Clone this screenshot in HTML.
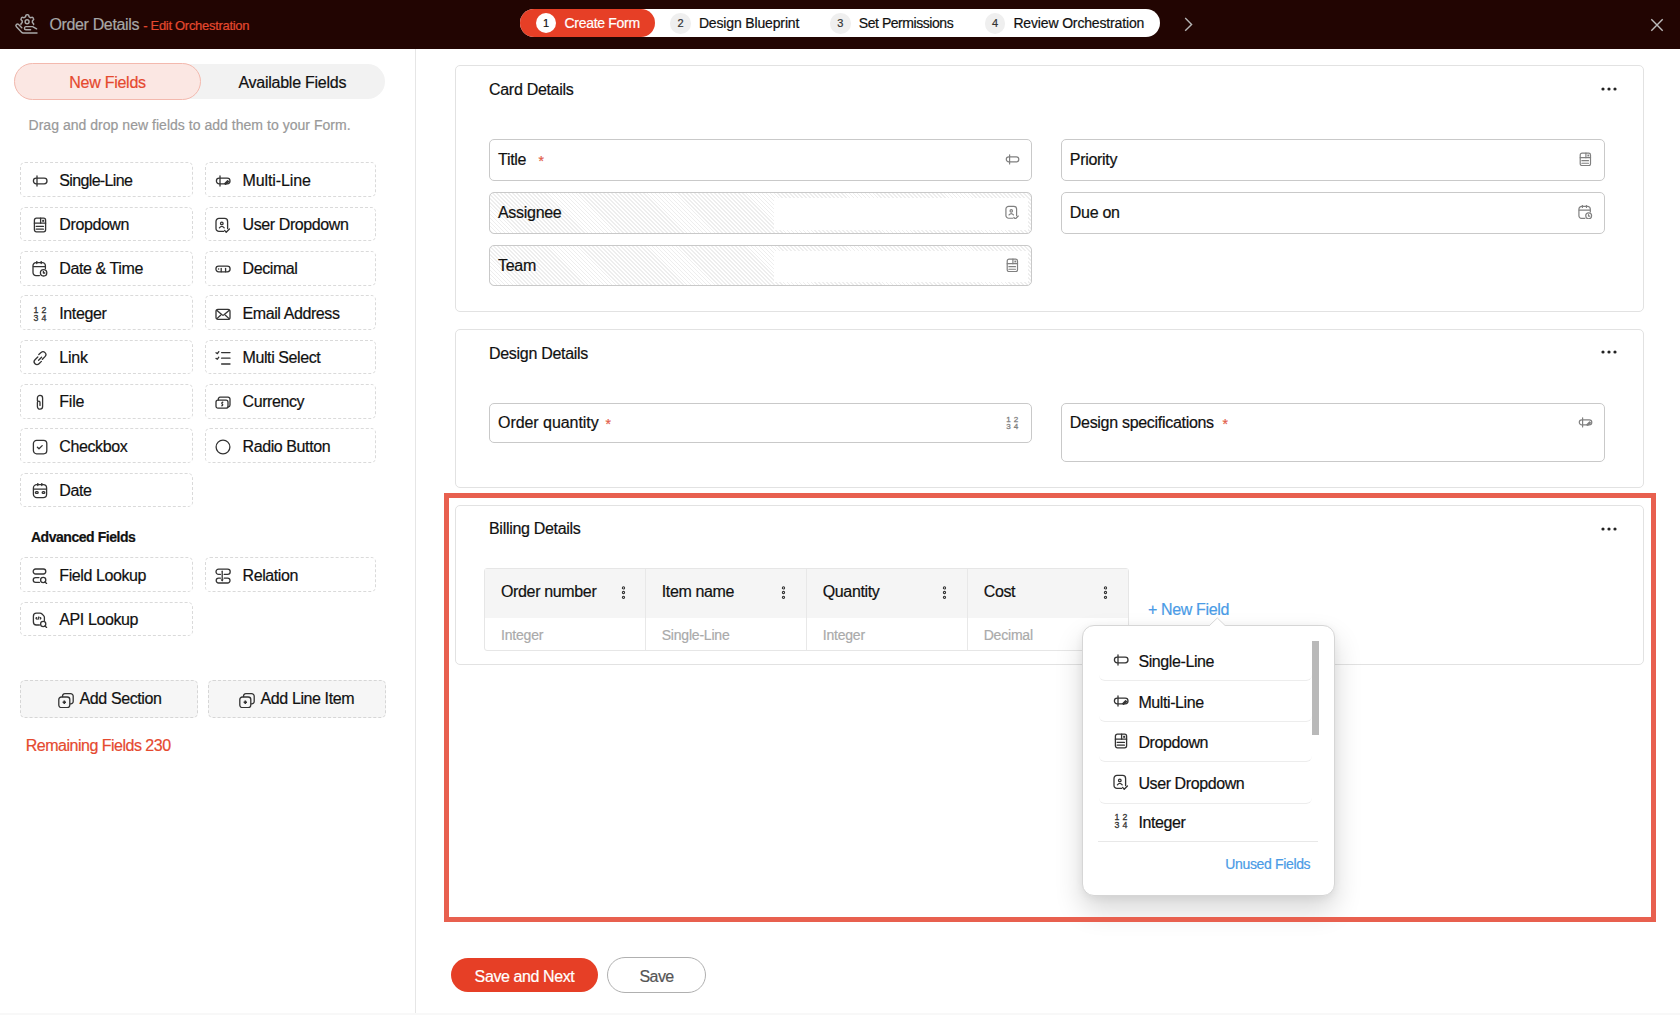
<!DOCTYPE html>
<html><head><meta charset="utf-8"><title>Order Details - Edit Orchestration</title>
<style>
html,body{margin:0;padding:0;}
body{width:1680px;height:1015px;overflow:hidden;background:#fff;position:relative;font-family:"Liberation Sans", sans-serif;}
.t{position:absolute;white-space:nowrap;-webkit-text-stroke:0.2px currentColor;}
.b{position:absolute;}
</style></head><body>
<div class="b" style="left:0;top:0;width:1680px;height:49px;background:#220502"></div>
<svg class="b" style="left:0.00px;top:0.00px;" width="45" height="45" viewBox="0 0 45 45"><g fill="none" stroke="#a9a9a9" stroke-width="1.45" stroke-linecap="round" stroke-linejoin="round"><path d="M21.8 27.7 L18.6 24.6 A1.55 1.55 0 0 0 16.4 26.8 L21.6 32.2 Q22.2 32.9 23.2 32.9 H37"/><path d="M30.6 29.75 H25.9 A1.58 1.58 0 0 1 25.9 26.6 H32.6 L36.6 28.8"/><path d="M21.06 24.61 L21.04 24.55 L21.02 24.49 L21.01 24.44 L20.99 24.38 L20.98 24.32 L20.97 24.26 L20.96 24.20 L20.96 24.13 L20.96 24.07 L20.97 24.00 L20.98 23.94 L21.00 23.87 L21.03 23.80 L21.07 23.72 L21.12 23.65 L21.18 23.57 L21.25 23.49 L21.33 23.41 L21.42 23.33 L21.50 23.25 L21.59 23.18 L21.68 23.10 L21.76 23.03 L21.84 22.96 L21.91 22.90 L21.96 22.83 L22.01 22.78 L22.06 22.72 L22.09 22.67 L22.12 22.61 L22.14 22.56 L22.16 22.51 L22.17 22.47 L22.18 22.42 L22.19 22.37 L22.19 22.33 L22.20 22.28 L22.20 22.24 L22.20 22.19 L22.20 22.15 L22.20 22.10 L22.20 22.06 L22.20 22.01 L22.20 21.97 L22.20 21.92 L22.20 21.88 L22.20 21.83 L22.20 21.79 L22.20 21.74 L22.20 21.70 L22.20 21.66 L22.20 21.61 L22.20 21.57 L22.20 21.52 L22.20 21.48 L22.20 21.43 L22.20 21.39 L22.20 21.34 L22.20 21.30 L22.20 21.25 L22.20 21.21 L22.20 21.16 L22.20 21.12 L22.19 21.07 L22.19 21.03 L22.18 20.98 L22.17 20.93 L22.16 20.89 L22.14 20.84 L22.12 20.79 L22.09 20.73 L22.06 20.68 L22.01 20.62 L21.96 20.57 L21.91 20.50 L21.84 20.44 L21.76 20.37 L21.68 20.30 L21.59 20.22 L21.50 20.15 L21.42 20.07 L21.33 19.99 L21.25 19.91 L21.18 19.83 L21.12 19.75 L21.07 19.68 L21.03 19.60 L21.00 19.53 L20.98 19.46 L20.97 19.40 L20.96 19.33 L20.96 19.27 L20.96 19.20 L20.97 19.14 L20.98 19.08 L20.99 19.02 L21.01 18.96 L21.02 18.91 L21.04 18.85 L21.06 18.79 L21.08 18.74 L21.11 18.68 L21.13 18.62 L21.16 18.57 L21.18 18.52 L21.21 18.46 L21.24 18.41 L21.27 18.36 L21.29 18.30 L21.32 18.25 L21.35 18.20 L21.39 18.15 L21.42 18.10 L21.45 18.04 L21.48 17.99 L21.52 17.94 L21.55 17.90 L21.59 17.85 L21.62 17.80 L21.66 17.75 L21.70 17.71 L21.74 17.66 L21.78 17.62 L21.83 17.57 L21.87 17.53 L21.92 17.49 L21.97 17.46 L22.02 17.42 L22.08 17.39 L22.14 17.37 L22.20 17.35 L22.27 17.33 L22.35 17.32 L22.44 17.32 L22.53 17.33 L22.62 17.34 L22.73 17.36 L22.83 17.39 L22.95 17.42 L23.06 17.46 L23.17 17.50 L23.28 17.53 L23.38 17.57 L23.48 17.60 L23.57 17.63 L23.65 17.65 L23.73 17.66 L23.80 17.67 L23.86 17.67 L23.92 17.67 L23.97 17.66 L24.02 17.65 L24.07 17.64 L24.12 17.63 L24.16 17.61 L24.20 17.59 L24.24 17.57 L24.29 17.55 L24.33 17.53 L24.36 17.51 L24.40 17.49 L24.44 17.46 L24.48 17.44 L24.52 17.42 L24.56 17.40 L24.60 17.37 L24.63 17.35 L24.67 17.33 L24.71 17.31 L24.75 17.28 L24.79 17.26 L24.83 17.24 L24.87 17.22 L24.90 17.20 L24.94 17.17 L24.98 17.15 L25.02 17.13 L25.06 17.11 L25.10 17.08 L25.14 17.06 L25.18 17.04 L25.21 17.01 L25.25 16.99 L25.29 16.96 L25.33 16.94 L25.36 16.91 L25.40 16.87 L25.43 16.84 L25.47 16.80 L25.50 16.76 L25.53 16.71 L25.56 16.65 L25.59 16.59 L25.61 16.51 L25.64 16.43 L25.66 16.34 L25.68 16.24 L25.70 16.13 L25.72 16.02 L25.75 15.90 L25.77 15.79 L25.80 15.68 L25.83 15.57 L25.86 15.47 L25.90 15.38 L25.94 15.30 L25.98 15.23 L26.03 15.16 L26.08 15.11 L26.13 15.06 L26.18 15.02 L26.24 14.99 L26.29 14.96 L26.35 14.94 L26.41 14.91 L26.46 14.90 L26.52 14.88 L26.58 14.87 L26.64 14.85 L26.70 14.84 L26.76 14.83 L26.82 14.83 L26.88 14.82 L26.94 14.81 L27.00 14.81 L27.06 14.81 L27.12 14.80 L27.18 14.80 L27.24 14.80 L27.30 14.80 L27.36 14.80 L27.42 14.80 L27.48 14.80 L27.54 14.81 L27.60 14.81 L27.66 14.81 L27.72 14.82 L27.78 14.83 L27.84 14.83 L27.90 14.84 L27.96 14.85 L28.02 14.87 L28.08 14.88 L28.14 14.90 L28.19 14.91 L28.25 14.94 L28.31 14.96 L28.36 14.99 L28.42 15.02 L28.47 15.06 L28.52 15.11 L28.57 15.16 L28.62 15.23 L28.66 15.30 L28.70 15.38 L28.74 15.47 L28.77 15.57 L28.80 15.68 L28.83 15.79 L28.85 15.90 L28.88 16.02 L28.90 16.13 L28.92 16.24 L28.94 16.34 L28.96 16.43 L28.99 16.51 L29.01 16.59 L29.04 16.65 L29.07 16.71 L29.10 16.76 L29.13 16.80 L29.17 16.84 L29.20 16.87 L29.24 16.91 L29.27 16.94 L29.31 16.96 L29.35 16.99 L29.39 17.01 L29.42 17.04 L29.46 17.06 L29.50 17.08 L29.54 17.11 L29.58 17.13 L29.62 17.15 L29.66 17.17 L29.70 17.20 L29.73 17.22 L29.77 17.24 L29.81 17.26 L29.85 17.28 L29.89 17.31 L29.93 17.33 L29.97 17.35 L30.00 17.37 L30.04 17.40 L30.08 17.42 L30.12 17.44 L30.16 17.46 L30.20 17.49 L30.24 17.51 L30.27 17.53 L30.31 17.55 L30.36 17.57 L30.40 17.59 L30.44 17.61 L30.48 17.63 L30.53 17.64 L30.58 17.65 L30.63 17.66 L30.68 17.67 L30.74 17.67 L30.80 17.67 L30.87 17.66 L30.95 17.65 L31.03 17.63 L31.12 17.60 L31.22 17.57 L31.32 17.53 L31.43 17.50 L31.54 17.46 L31.65 17.42 L31.77 17.39 L31.87 17.36 L31.98 17.34 L32.07 17.33 L32.16 17.32 L32.25 17.32 L32.33 17.33 L32.40 17.35 L32.46 17.37 L32.52 17.39 L32.58 17.42 L32.63 17.46 L32.68 17.49 L32.73 17.53 L32.77 17.57 L32.82 17.62 L32.86 17.66 L32.90 17.71 L32.94 17.75 L32.98 17.80 L33.01 17.85 L33.05 17.90 L33.08 17.94 L33.12 17.99 L33.15 18.04 L33.18 18.10 L33.21 18.15 L33.25 18.20 L33.28 18.25 L33.31 18.30 L33.33 18.36 L33.36 18.41 L33.39 18.46 L33.42 18.52 L33.44 18.57 L33.47 18.62 L33.49 18.68 L33.52 18.74 L33.54 18.79 L33.56 18.85 L33.58 18.91 L33.59 18.96 L33.61 19.02 L33.62 19.08 L33.63 19.14 L33.64 19.20 L33.64 19.27 L33.64 19.33 L33.63 19.40 L33.62 19.46 L33.60 19.53 L33.57 19.60 L33.53 19.68 L33.48 19.75 L33.42 19.83 L33.35 19.91 L33.27 19.99 L33.18 20.07 L33.10 20.15 L33.01 20.22 L32.92 20.30 L32.84 20.37 L32.76 20.44 L32.69 20.50 L32.64 20.57 L32.59 20.62 L32.54 20.68 L32.51 20.73 L32.48 20.79 L32.46 20.84 L32.44 20.89 L32.43 20.93 L32.42 20.98 L32.41 21.03 L32.41 21.07 L32.40 21.12 L32.40 21.16 L32.40 21.21 L32.40 21.25 L32.40 21.30 L32.40 21.34 L32.40 21.39 L32.40 21.43 L32.40 21.48 L32.40 21.52 L32.40 21.57 L32.40 21.61 L32.40 21.66 L32.40 21.70 L32.40 21.74 L32.40 21.79 L32.40 21.83 L32.40 21.88 L32.40 21.92 L32.40 21.97 L32.40 22.01 L32.40 22.06 L32.40 22.10 L32.40 22.15 L32.40 22.19 L32.40 22.24 L32.40 22.28 L32.41 22.33 L32.41 22.37 L32.42 22.42 L32.43 22.47 L32.44 22.51 L32.46 22.56 L32.48 22.61 L32.51 22.67 L32.54 22.72 L32.59 22.78 L32.64 22.83 L32.69 22.90 L32.76 22.96 L32.84 23.03 L32.92 23.10 L33.01 23.18 L33.10 23.25 L33.18 23.33 L33.27 23.41 L33.35 23.49 L33.42 23.57 L33.48 23.65 L33.53 23.72 L33.57 23.80 L33.60 23.87 L33.62 23.94 L33.63 24.00 L33.64 24.07 L33.64 24.13 L33.64 24.20 L33.63 24.26 L33.62 24.32 L33.61 24.38 L33.59 24.44 L33.58 24.49 L33.56 24.55 L33.54 24.61"/><circle cx="27.1" cy="21.7" r="1.95"/></g></svg>
<div class="t" style="left:49.40px;top:15.36px;font-size:16px;line-height:20.0px;color:#a8a8a8;letter-spacing:-0.35px;">Order Details</div>
<div class="t" style="left:143.20px;top:18.27px;font-size:13px;line-height:16.25px;color:#e5492f;letter-spacing:-0.3px;">- Edit Orchestration</div>
<div class="b" style="left:520.00px;top:9.00px;width:640.00px;height:28.00px;background:#fff;border-radius:14px"></div>
<div class="b" style="left:520.00px;top:9.00px;width:135.00px;height:28.00px;background:#e63f26;border-radius:14px"></div>
<div class="b" style="left:535.8px;top:13.2px;width:20.3px;height:20.3px;border-radius:50%;background:#fff"></div>
<div class="t" style="left:536.00px;width:20px;text-align:center;top:17.31px;font-size:11px;line-height:13.75px;color:#111;">1</div>
<div class="t" style="left:564.50px;top:15.40px;font-size:14px;line-height:17.5px;color:#fff;letter-spacing:-0.3px;">Create Form</div>
<div class="b" style="left:670.20px;top:13px;width:20.6px;height:20.6px;border-radius:50%;background:#efefef"></div>
<div class="t" style="left:670.50px;width:20px;text-align:center;top:17.31px;font-size:11px;line-height:13.75px;color:#333;">2</div>
<div class="t" style="left:698.90px;top:15.40px;font-size:14px;line-height:17.5px;color:#111;letter-spacing:-0.15px;">Design Blueprint</div>
<div class="b" style="left:830.00px;top:13px;width:20.6px;height:20.6px;border-radius:50%;background:#efefef"></div>
<div class="t" style="left:830.30px;width:20px;text-align:center;top:17.31px;font-size:11px;line-height:13.75px;color:#333;">3</div>
<div class="t" style="left:858.80px;top:15.40px;font-size:14px;line-height:17.5px;color:#111;letter-spacing:-0.45px;">Set Permissions</div>
<div class="b" style="left:984.70px;top:13px;width:20.6px;height:20.6px;border-radius:50%;background:#efefef"></div>
<div class="t" style="left:985.00px;width:20px;text-align:center;top:17.31px;font-size:11px;line-height:13.75px;color:#333;">4</div>
<div class="t" style="left:1013.40px;top:15.40px;font-size:14px;line-height:17.5px;color:#111;letter-spacing:-0.15px;">Review Orchestration</div>
<svg class="b" style="left:1182.00px;top:16.00px;" width="13" height="17" viewBox="0 0 13 17"><path d="M3.2 2 L9.6 8.4 L3.2 14.8" fill="none" stroke="#b5b5b5" stroke-width="1.4"/></svg>
<svg class="b" style="left:1650.00px;top:18.00px;" width="14" height="14" viewBox="0 0 14 14"><path d="M1.3 1.3 L12.7 12.7 M12.7 1.3 L1.3 12.7" fill="none" stroke="#bdbdbd" stroke-width="1.4"/></svg>
<div class="b" style="left:415.00px;top:49.00px;width:1.00px;height:966.00px;background:#e6e6e6"></div>
<div class="b" style="left:14.00px;top:63.60px;width:371.00px;height:35.80px;background:#f2f2f2;border-radius:18px"></div>
<div class="b" style="left:14.00px;top:63.00px;width:187.00px;height:37.00px;background:#fbe7e3;border:1px solid #f3b9ae;border-radius:19px;box-sizing:border-box"></div>
<div class="t" style="left:17.50px;width:180px;text-align:center;top:73.36px;font-size:16px;line-height:20.0px;color:#e5492f;letter-spacing:-0.25px;">New Fields</div>
<div class="t" style="left:202.30px;width:180px;text-align:center;top:73.36px;font-size:16px;line-height:20.0px;color:#111;letter-spacing:-0.25px;">Available Fields</div>
<div class="t" style="left:28.50px;top:117.30px;font-size:14px;line-height:17.5px;color:#999;letter-spacing:0.03px;">Drag and drop new fields to add them to your Form.</div>
<div class="b" style="left:20.40px;top:162.40px;width:172.40px;height:34.80px;border:1px dashed #dadada;border-radius:5px;box-sizing:border-box"></div>
<svg class="b" style="left:32.00px;top:172.70px;" width="16.0" height="16.0" viewBox="0 0 16 16"><g fill="none" stroke="#333" stroke-width="1.3" stroke-linecap="round" stroke-linejoin="round"><rect x="1.4" y="5.2" width="13.6" height="5.6" rx="2.8"/><line x1="5" y1="3" x2="5" y2="13"/></g></svg>
<div class="t" style="left:59.30px;top:170.76px;font-size:16px;line-height:20.0px;color:#111;letter-spacing:-0.65px;">Single-Line</div>
<div class="b" style="left:20.40px;top:206.70px;width:172.40px;height:34.80px;border:1px dashed #dadada;border-radius:5px;box-sizing:border-box"></div>
<svg class="b" style="left:32.00px;top:217.00px;" width="16.0" height="16.0" viewBox="0 0 16 16"><g fill="none" stroke="#333" stroke-width="1.3" stroke-linecap="round" stroke-linejoin="round"><rect x="2.4" y="1.2" width="11.2" height="13.6" rx="2"/><line x1="2.4" y1="6.2" x2="13.6" y2="6.2"/><line x1="8.6" y1="1.2" x2="8.6" y2="6.2"/><line x1="4.2" y1="9.4" x2="11.4" y2="9.4"/><line x1="4.2" y1="12.2" x2="11.4" y2="12.2"/></g><rect x="10.2" y="2.8" width="2" height="2" fill="#333"/></svg>
<div class="t" style="left:59.30px;top:215.06px;font-size:16px;line-height:20.0px;color:#111;letter-spacing:-0.4px;">Dropdown</div>
<div class="b" style="left:20.40px;top:251.00px;width:172.40px;height:34.80px;border:1px dashed #dadada;border-radius:5px;box-sizing:border-box"></div>
<svg class="b" style="left:32.00px;top:261.30px;" width="16.0" height="16.0" viewBox="0 0 16 16"><g fill="none" stroke="#333" stroke-width="1.3" stroke-linecap="round" stroke-linejoin="round"><path d="M7.4 14.6 H4 A3 3 0 0 1 1 11.6 V4.6 A3 3 0 0 1 4 1.6 H10.4 A3 3 0 0 1 13.4 4.6 V7.6"/><line x1="1.4" y1="5.6" x2="13" y2="5.6"/><line x1="4.8" y1="0.6" x2="4.8" y2="2.6"/><line x1="9.2" y1="0.6" x2="9.2" y2="2.6"/><circle cx="11.6" cy="11.8" r="3.2"/><path d="M11.4 10.4 V12 H12.8"/></g></svg>
<div class="t" style="left:59.30px;top:259.36px;font-size:16px;line-height:20.0px;color:#111;letter-spacing:-0.4px;">Date &amp; Time</div>
<div class="b" style="left:20.40px;top:295.30px;width:172.40px;height:34.80px;border:1px dashed #dadada;border-radius:5px;box-sizing:border-box"></div>
<svg class="b" style="left:32.00px;top:305.60px;" width="16.0" height="16.0" viewBox="0 0 16 16"><g fill="#333" stroke="#333" stroke-width="0.3" font-family="Liberation Sans, sans-serif" font-size="8.8" text-anchor="middle"><text x="3.9" y="7.2">1</text><text x="12" y="7.2">2</text><text x="3.9" y="15.1">3</text><text x="12" y="15.1">4</text></g></svg>
<div class="t" style="left:59.30px;top:303.66px;font-size:16px;line-height:20.0px;color:#111;letter-spacing:-0.4px;">Integer</div>
<div class="b" style="left:20.40px;top:339.60px;width:172.40px;height:34.80px;border:1px dashed #dadada;border-radius:5px;box-sizing:border-box"></div>
<svg class="b" style="left:32.00px;top:349.90px;" width="16.0" height="16.0" viewBox="0 0 16 16"><g fill="none" stroke="#333" stroke-width="1.3" stroke-linecap="round" stroke-linejoin="round"><path d="M6.8 4.6 L9 2.6 A2.6 2.6 0 0 1 13 6.6 L10.4 9.2"/><path d="M5.8 7 L3 9.8 A2.6 2.6 0 0 0 7 13.8 L9.4 11.4"/><line x1="6.6" y1="10.2" x2="9.6" y2="7.2"/></g></svg>
<div class="t" style="left:59.30px;top:347.96px;font-size:16px;line-height:20.0px;color:#111;letter-spacing:-0.2px;">Link</div>
<div class="b" style="left:20.40px;top:383.90px;width:172.40px;height:34.80px;border:1px dashed #dadada;border-radius:5px;box-sizing:border-box"></div>
<svg class="b" style="left:32.00px;top:394.20px;" width="16.0" height="16.0" viewBox="0 0 16 16"><g fill="none" stroke="#333" stroke-width="1.3" stroke-linecap="round" stroke-linejoin="round"><path d="M5.4 6.8 V4 A2.6 2.6 0 0 1 10.6 4 V12.6 A2.6 2.6 0 0 1 5.4 12.6 V8.4 A1.3 1.3 0 0 1 8 8.4 V11.4"/></g></svg>
<div class="t" style="left:59.30px;top:392.26px;font-size:16px;line-height:20.0px;color:#111;letter-spacing:-0.2px;">File</div>
<div class="b" style="left:20.40px;top:428.20px;width:172.40px;height:34.80px;border:1px dashed #dadada;border-radius:5px;box-sizing:border-box"></div>
<svg class="b" style="left:32.00px;top:438.50px;" width="16.0" height="16.0" viewBox="0 0 16 16"><g fill="none" stroke="#333" stroke-width="1.3" stroke-linecap="round" stroke-linejoin="round"><rect x="1.4" y="1.4" width="13.4" height="13.4" rx="3.2"/><path d="M5.4 8.2 L7 9.8 L10.2 6.6"/></g></svg>
<div class="t" style="left:59.30px;top:436.56px;font-size:16px;line-height:20.0px;color:#111;letter-spacing:-0.4px;">Checkbox</div>
<div class="b" style="left:20.40px;top:472.50px;width:172.40px;height:34.80px;border:1px dashed #dadada;border-radius:5px;box-sizing:border-box"></div>
<svg class="b" style="left:32.00px;top:482.80px;" width="16.0" height="16.0" viewBox="0 0 16 16"><g fill="none" stroke="#333" stroke-width="1.3" stroke-linecap="round" stroke-linejoin="round"><rect x="1.4" y="1.6" width="13.2" height="13" rx="3.4"/><line x1="1.6" y1="6.2" x2="14.4" y2="6.2"/><line x1="5.8" y1="0.6" x2="5.8" y2="2.6"/><line x1="9.8" y1="0.6" x2="9.8" y2="2.6"/><rect x="3.4" y="8.6" width="2.8" height="1.8" rx="0.9"/><rect x="10.2" y="8.6" width="2.6" height="1.8" rx="0.9"/></g></svg>
<div class="t" style="left:59.30px;top:480.86px;font-size:16px;line-height:20.0px;color:#111;letter-spacing:-0.4px;">Date</div>
<div class="b" style="left:204.60px;top:162.40px;width:171.20px;height:34.80px;border:1px dashed #dadada;border-radius:5px;box-sizing:border-box"></div>
<svg class="b" style="left:215.20px;top:172.70px;" width="16.0" height="16.0" viewBox="0 0 16 16"><g fill="none" stroke="#333" stroke-width="1.3" stroke-linecap="round" stroke-linejoin="round"><path d="M5 5.2 H12.2 A2.8 2.8 0 0 1 12.2 10.8 H4.2 A2.8 2.8 0 0 1 4.2 5.2"/><line x1="5" y1="3" x2="5" y2="13"/><path d="M9.6 10.6 L12.6 7.6 L13.6 8.6 L10.6 11.2"/></g></svg>
<div class="t" style="left:242.50px;top:170.76px;font-size:16px;line-height:20.0px;color:#111;letter-spacing:-0.1px;">Multi-Line</div>
<div class="b" style="left:204.60px;top:206.70px;width:171.20px;height:34.80px;border:1px dashed #dadada;border-radius:5px;box-sizing:border-box"></div>
<svg class="b" style="left:215.20px;top:217.00px;" width="16.0" height="16.0" viewBox="0 0 16 16"><g fill="none" stroke="#333" stroke-width="1.3" stroke-linecap="round" stroke-linejoin="round"><path d="M8.6 14.4 H4 A3 3 0 0 1 1 11.4 V4.4 A3 3 0 0 1 4 1.4 H9.6 A3 3 0 0 1 12.6 4.4 V11.6"/><circle cx="6.8" cy="6.4" r="1.3"/><path d="M4.4 10.8 Q6.8 7.8 9.2 10.8"/><path d="M9.6 13.4 L11.2 15.2 L14.4 12"/></g></svg>
<div class="t" style="left:242.50px;top:215.06px;font-size:16px;line-height:20.0px;color:#111;letter-spacing:-0.4px;">User Dropdown</div>
<div class="b" style="left:204.60px;top:251.00px;width:171.20px;height:34.80px;border:1px dashed #dadada;border-radius:5px;box-sizing:border-box"></div>
<svg class="b" style="left:215.20px;top:261.30px;" width="16.0" height="16.0" viewBox="0 0 16 16"><g fill="none" stroke="#333" stroke-width="1.3" stroke-linecap="round" stroke-linejoin="round"><rect x="0.9" y="5.2" width="14.2" height="5.6" rx="2.8"/><line x1="6.2" y1="7.4" x2="6.2" y2="10.8"/><line x1="10.6" y1="7.4" x2="10.6" y2="10.8"/></g><circle cx="3.6" cy="8" r="0.8" fill="#333"/></svg>
<div class="t" style="left:242.50px;top:259.36px;font-size:16px;line-height:20.0px;color:#111;letter-spacing:-0.4px;">Decimal</div>
<div class="b" style="left:204.60px;top:295.30px;width:171.20px;height:34.80px;border:1px dashed #dadada;border-radius:5px;box-sizing:border-box"></div>
<svg class="b" style="left:215.20px;top:305.60px;" width="16.0" height="16.0" viewBox="0 0 16 16"><g fill="none" stroke="#333" stroke-width="1.3" stroke-linecap="round" stroke-linejoin="round"><rect x="1" y="3.4" width="14" height="10" rx="2"/><path d="M2 4.4 L7 8.8 Q8 9.6 9 8.8 L14 4.4"/><line x1="2.2" y1="12.4" x2="5.6" y2="9.2"/><line x1="13.8" y1="12.4" x2="10.4" y2="9.2"/></g></svg>
<div class="t" style="left:242.50px;top:303.66px;font-size:16px;line-height:20.0px;color:#111;letter-spacing:-0.4px;">Email Address</div>
<div class="b" style="left:204.60px;top:339.60px;width:171.20px;height:34.80px;border:1px dashed #dadada;border-radius:5px;box-sizing:border-box"></div>
<svg class="b" style="left:215.20px;top:349.90px;" width="16.0" height="16.0" viewBox="0 0 16 16"><g fill="none" stroke="#333" stroke-width="1.3" stroke-linecap="round" stroke-linejoin="round"><line x1="6.6" y1="2.6" x2="15" y2="2.6"/><line x1="6.6" y1="8.2" x2="15" y2="8.2"/><line x1="6.6" y1="14" x2="15" y2="14"/><path d="M1 2.8 L2.4 3.6 L3.8 1.6"/><path d="M1 8.4 L2.4 9.2 L3.8 7.2"/></g></svg>
<div class="t" style="left:242.50px;top:347.96px;font-size:16px;line-height:20.0px;color:#111;letter-spacing:-0.4px;">Multi Select</div>
<div class="b" style="left:204.60px;top:383.90px;width:171.20px;height:34.80px;border:1px dashed #dadada;border-radius:5px;box-sizing:border-box"></div>
<svg class="b" style="left:215.20px;top:394.20px;" width="16.0" height="16.0" viewBox="0 0 16 16"><g fill="none" stroke="#333" stroke-width="1.3" stroke-linecap="round" stroke-linejoin="round"><rect x="1" y="6.2" width="12" height="8" rx="2"/><path d="M3.4 6 A2 2 0 0 1 5.4 3.2 H13 A2 2 0 0 1 15 5.2 V11 A2 2 0 0 1 13.2 13"/><path d="M7.8 8.2 Q6.2 8.8 7.2 10 Q8.4 11 6.8 11.8"/></g></svg>
<div class="t" style="left:242.50px;top:392.26px;font-size:16px;line-height:20.0px;color:#111;letter-spacing:-0.4px;">Currency</div>
<div class="b" style="left:204.60px;top:428.20px;width:171.20px;height:34.80px;border:1px dashed #dadada;border-radius:5px;box-sizing:border-box"></div>
<svg class="b" style="left:215.20px;top:438.50px;" width="16.0" height="16.0" viewBox="0 0 16 16"><g fill="none" stroke="#333" stroke-width="1.3" stroke-linecap="round" stroke-linejoin="round"><circle cx="8" cy="8" r="6.9"/></g></svg>
<div class="t" style="left:242.50px;top:436.56px;font-size:16px;line-height:20.0px;color:#111;letter-spacing:-0.4px;">Radio Button</div>
<div class="t" style="left:30.90px;top:529.00px;font-size:14px;line-height:17.5px;color:#111;font-weight:bold;letter-spacing:-0.45px;">Advanced Fields</div>
<div class="b" style="left:20.40px;top:557.20px;width:172.40px;height:34.80px;border:1px dashed #dadada;border-radius:5px;box-sizing:border-box"></div>
<svg class="b" style="left:32.00px;top:567.50px;" width="16.0" height="16.0" viewBox="0 0 16 16"><g fill="none" stroke="#333" stroke-width="1.3" stroke-linecap="round" stroke-linejoin="round"><rect x="1.2" y="1" width="12.6" height="5" rx="2.4"/><path d="M7 9.6 H3.6 A2.4 2.4 0 0 0 3.6 14.4 H7.4"/><circle cx="11.2" cy="12" r="2.6"/><line x1="13" y1="14" x2="14.6" y2="15.4"/></g></svg>
<div class="t" style="left:59.30px;top:565.56px;font-size:16px;line-height:20.0px;color:#111;letter-spacing:-0.4px;">Field Lookup</div>
<div class="b" style="left:204.60px;top:557.20px;width:171.20px;height:34.80px;border:1px dashed #dadada;border-radius:5px;box-sizing:border-box"></div>
<svg class="b" style="left:215.20px;top:567.50px;" width="16.0" height="16.0" viewBox="0 0 16 16"><g fill="none" stroke="#333" stroke-width="1.3" stroke-linecap="round" stroke-linejoin="round"><path d="M5.4 6.4 H3.6 A2.4 2.4 0 0 1 3.6 1.2 H12.6 A2.4 2.4 0 0 1 12.6 6.4 H9.2"/><path d="M5.4 10.2 H3.6 A2.4 2.4 0 0 0 3.6 15 H12.6 A2.4 2.4 0 0 0 12.6 10.2 H9.2"/><line x1="7.2" y1="3.2" x2="7.2" y2="12.6"/></g><path d="M5.6 11.6 L8.8 11.6 L7.2 13.6 Z" fill="#333"/></svg>
<div class="t" style="left:242.50px;top:565.56px;font-size:16px;line-height:20.0px;color:#111;letter-spacing:-0.4px;">Relation</div>
<div class="b" style="left:20.40px;top:601.50px;width:172.40px;height:34.80px;border:1px dashed #dadada;border-radius:5px;box-sizing:border-box"></div>
<svg class="b" style="left:32.00px;top:611.80px;" width="16.0" height="16.0" viewBox="0 0 16 16"><g fill="none" stroke="#333" stroke-width="1.3" stroke-linecap="round" stroke-linejoin="round"><path d="M7.4 13 H4.4 A3 3 0 0 1 1.4 10 V4.2 A3 3 0 0 1 4.4 1.2 H8 Q9.2 1.2 10 2 L11.6 3.6 Q12.4 4.4 12.4 5.6 V8.4"/><circle cx="11.2" cy="12" r="2.6"/><line x1="13" y1="14" x2="14.6" y2="15.4"/><path d="M4.6 5.6 Q3.4 6.2 4.6 7"/><line x1="6.8" y1="5" x2="6" y2="7.4"/><path d="M8.2 5.6 Q9.4 6.2 8.2 7"/></g></svg>
<div class="t" style="left:59.30px;top:609.86px;font-size:16px;line-height:20.0px;color:#111;letter-spacing:-0.4px;">API Lookup</div>
<div class="b" style="left:20.40px;top:680.00px;width:177.40px;height:37.80px;background:#f6f6f6;border:1px dashed #d6d6d6;border-radius:5px;box-sizing:border-box"></div>
<svg class="b" style="left:57.80px;top:692.00px;" width="16.0" height="16.0" viewBox="0 0 16 16"><g fill="none" stroke="#333" stroke-width="1.3" stroke-linecap="round" stroke-linejoin="round"><rect x="0.8" y="5" width="11" height="10.6" rx="2.6"/><path d="M4.6 4.6 A2.4 2.4 0 0 1 7 1.6 H12.6 A2.6 2.6 0 0 1 15.2 4.2 V9.4 A2.4 2.4 0 0 1 12.4 11.8"/></g><path d="M6.3 8.6 V12 M4.6 10.3 H8" stroke="#333" stroke-width="1.6"/></svg>
<div class="t" style="left:79.60px;top:688.86px;font-size:16px;line-height:20.0px;color:#111;letter-spacing:-0.4px;">Add Section</div>
<div class="b" style="left:208.00px;top:680.00px;width:177.80px;height:37.80px;background:#f6f6f6;border:1px dashed #d6d6d6;border-radius:5px;box-sizing:border-box"></div>
<svg class="b" style="left:239.40px;top:692.00px;" width="16.0" height="16.0" viewBox="0 0 16 16"><g fill="none" stroke="#333" stroke-width="1.3" stroke-linecap="round" stroke-linejoin="round"><rect x="0.8" y="5" width="11" height="10.6" rx="2.6"/><path d="M4.6 4.6 A2.4 2.4 0 0 1 7 1.6 H12.6 A2.6 2.6 0 0 1 15.2 4.2 V9.4 A2.4 2.4 0 0 1 12.4 11.8"/></g><path d="M6.3 8.6 V12 M4.6 10.3 H8" stroke="#333" stroke-width="1.6"/></svg>
<div class="t" style="left:260.60px;top:688.86px;font-size:16px;line-height:20.0px;color:#111;letter-spacing:-0.4px;">Add Line Item</div>
<div class="t" style="left:25.80px;top:736.06px;font-size:16px;line-height:20.0px;color:#e5492f;letter-spacing:-0.5px;">Remaining Fields 230</div>
<div class="b" style="left:455.40px;top:64.50px;width:1188.40px;height:247.30px;border:1px solid #e2e2e2;border-radius:5px;box-sizing:border-box;background:#fff"></div>
<div class="t" style="left:489.00px;top:80.46px;font-size:16px;line-height:20.0px;color:#111;letter-spacing:-0.3px;">Card Details</div>
<svg class="b" style="left:1600.00px;top:86.30px;" width="18" height="6" viewBox="0 0 18 6"><g fill="#222"><circle cx="3" cy="3" r="1.6"/><circle cx="9" cy="3" r="1.6"/><circle cx="15" cy="3" r="1.6"/></g></svg>
<div class="b" style="left:489.00px;top:139.20px;width:542.80px;height:41.60px;border:1px solid #c9c9c9;border-radius:5px;box-sizing:border-box;background:#fff"></div>
<div class="t" style="left:498.00px;top:150.26px;font-size:16px;line-height:20.0px;color:#111;letter-spacing:-0.3px;">Title</div>
<svg class="b" style="left:1005.44px;top:151.54px;" width="14.72" height="14.72" viewBox="0 0 16 16"><g fill="none" stroke="#808080" stroke-width="1.3" stroke-linecap="round" stroke-linejoin="round"><rect x="1.4" y="5.2" width="13.6" height="5.6" rx="2.8"/><line x1="5" y1="3" x2="5" y2="13"/></g></svg>
<div class="t" style="left:538.60px;top:152.70px;font-size:14px;line-height:17.5px;color:#e25c4a;">*</div>
<div class="b" style="left:1061.30px;top:139.20px;width:543.50px;height:41.60px;border:1px solid #c9c9c9;border-radius:5px;box-sizing:border-box;background:#fff"></div>
<div class="t" style="left:1069.80px;top:150.26px;font-size:16px;line-height:20.0px;color:#111;letter-spacing:-0.3px;">Priority</div>
<svg class="b" style="left:1578.44px;top:151.54px;" width="14.72" height="14.72" viewBox="0 0 16 16"><g fill="none" stroke="#808080" stroke-width="1.3" stroke-linecap="round" stroke-linejoin="round"><rect x="2.4" y="1.2" width="11.2" height="13.6" rx="2"/><line x1="2.4" y1="6.2" x2="13.6" y2="6.2"/><line x1="8.6" y1="1.2" x2="8.6" y2="6.2"/><line x1="4.2" y1="9.4" x2="11.4" y2="9.4"/><line x1="4.2" y1="12.2" x2="11.4" y2="12.2"/></g><rect x="10.2" y="2.8" width="2" height="2" fill="#808080"/></svg>
<div class="b" style="left:489.00px;top:192.30px;width:542.80px;height:41.50px;border:1px solid #c9c9c9;border-radius:5px;box-sizing:border-box;background:repeating-linear-gradient(45deg,#fff 0,#fff 1.6px,#eeeeee 1.6px,#eeeeee 2.8px)"></div>
<div class="b" style="left:774.00px;top:197.80px;width:254.30px;height:32.50px;background:#fff"></div>
<div class="t" style="left:498.00px;top:203.36px;font-size:16px;line-height:20.0px;color:#111;letter-spacing:-0.3px;">Assignee</div>
<svg class="b" style="left:1005.44px;top:204.64px;" width="14.72" height="14.72" viewBox="0 0 16 16"><g fill="none" stroke="#808080" stroke-width="1.3" stroke-linecap="round" stroke-linejoin="round"><path d="M8.6 14.4 H4 A3 3 0 0 1 1 11.4 V4.4 A3 3 0 0 1 4 1.4 H9.6 A3 3 0 0 1 12.6 4.4 V11.6"/><circle cx="6.8" cy="6.4" r="1.3"/><path d="M4.4 10.8 Q6.8 7.8 9.2 10.8"/><path d="M9.6 13.4 L11.2 15.2 L14.4 12"/></g></svg>
<div class="b" style="left:1061.30px;top:192.30px;width:543.50px;height:41.50px;border:1px solid #c9c9c9;border-radius:5px;box-sizing:border-box;background:#fff"></div>
<div class="t" style="left:1069.80px;top:203.36px;font-size:16px;line-height:20.0px;color:#111;letter-spacing:-0.3px;">Due on</div>
<svg class="b" style="left:1578.44px;top:204.64px;" width="14.72" height="14.72" viewBox="0 0 16 16"><g fill="none" stroke="#808080" stroke-width="1.3" stroke-linecap="round" stroke-linejoin="round"><path d="M7.4 14.6 H4 A3 3 0 0 1 1 11.6 V4.6 A3 3 0 0 1 4 1.6 H10.4 A3 3 0 0 1 13.4 4.6 V7.6"/><line x1="1.4" y1="5.6" x2="13" y2="5.6"/><line x1="4.8" y1="0.6" x2="4.8" y2="2.6"/><line x1="9.2" y1="0.6" x2="9.2" y2="2.6"/><circle cx="11.6" cy="11.8" r="3.2"/><path d="M11.4 10.4 V12 H12.8"/></g></svg>
<div class="b" style="left:489.00px;top:245.30px;width:542.80px;height:40.50px;border:1px solid #c9c9c9;border-radius:5px;box-sizing:border-box;background:repeating-linear-gradient(45deg,#fff 0,#fff 1.6px,#eeeeee 1.6px,#eeeeee 2.8px)"></div>
<div class="b" style="left:774.00px;top:250.80px;width:254.30px;height:31.50px;background:#fff"></div>
<div class="t" style="left:498.00px;top:256.36px;font-size:16px;line-height:20.0px;color:#111;letter-spacing:-0.3px;">Team</div>
<svg class="b" style="left:1005.44px;top:257.64px;" width="14.72" height="14.72" viewBox="0 0 16 16"><g fill="none" stroke="#808080" stroke-width="1.3" stroke-linecap="round" stroke-linejoin="round"><rect x="2.4" y="1.2" width="11.2" height="13.6" rx="2"/><line x1="2.4" y1="6.2" x2="13.6" y2="6.2"/><line x1="8.6" y1="1.2" x2="8.6" y2="6.2"/><line x1="4.2" y1="9.4" x2="11.4" y2="9.4"/><line x1="4.2" y1="12.2" x2="11.4" y2="12.2"/></g><rect x="10.2" y="2.8" width="2" height="2" fill="#808080"/></svg>
<div class="b" style="left:455.40px;top:328.50px;width:1188.40px;height:159.50px;border:1px solid #e2e2e2;border-radius:5px;box-sizing:border-box;background:#fff"></div>
<div class="t" style="left:489.00px;top:343.56px;font-size:16px;line-height:20.0px;color:#111;letter-spacing:-0.3px;">Design Details</div>
<svg class="b" style="left:1600.00px;top:349.40px;" width="18" height="6" viewBox="0 0 18 6"><g fill="#222"><circle cx="3" cy="3" r="1.6"/><circle cx="9" cy="3" r="1.6"/><circle cx="15" cy="3" r="1.6"/></g></svg>
<div class="b" style="left:489.00px;top:403.00px;width:542.80px;height:40.40px;border:1px solid #c9c9c9;border-radius:5px;box-sizing:border-box;background:#fff"></div>
<div class="t" style="left:498.00px;top:413.16px;font-size:16px;line-height:20.0px;color:#111;letter-spacing:-0.05px;">Order quantity</div>
<svg class="b" style="left:1005.44px;top:415.34px;" width="14.72" height="14.72" viewBox="0 0 16 16"><g fill="#808080" stroke="#808080" stroke-width="0.3" font-family="Liberation Sans, sans-serif" font-size="8.8" text-anchor="middle"><text x="3.9" y="7.2">1</text><text x="12" y="7.2">2</text><text x="3.9" y="15.1">3</text><text x="12" y="15.1">4</text></g></svg>
<div class="t" style="left:605.60px;top:415.90px;font-size:14px;line-height:17.5px;color:#e25c4a;">*</div>
<div class="b" style="left:1061.30px;top:403.00px;width:543.50px;height:59.40px;border:1px solid #c9c9c9;border-radius:5px;box-sizing:border-box;background:#fff"></div>
<div class="t" style="left:1069.80px;top:413.16px;font-size:16px;line-height:20.0px;color:#111;letter-spacing:-0.3px;">Design specifications</div>
<svg class="b" style="left:1578.44px;top:415.34px;" width="14.72" height="14.72" viewBox="0 0 16 16"><g fill="none" stroke="#808080" stroke-width="1.3" stroke-linecap="round" stroke-linejoin="round"><path d="M5 5.2 H12.2 A2.8 2.8 0 0 1 12.2 10.8 H4.2 A2.8 2.8 0 0 1 4.2 5.2"/><line x1="5" y1="3" x2="5" y2="13"/><path d="M9.6 10.6 L12.6 7.6 L13.6 8.6 L10.6 11.2"/></g></svg>
<div class="t" style="left:1222.40px;top:415.90px;font-size:14px;line-height:17.5px;color:#e25c4a;">*</div>
<div class="b" style="left:455.40px;top:504.50px;width:1188.40px;height:160.10px;border:1px solid #e2e2e2;border-radius:5px;box-sizing:border-box;background:#fff"></div>
<div class="t" style="left:489.00px;top:518.86px;font-size:16px;line-height:20.0px;color:#111;letter-spacing:-0.3px;">Billing Details</div>
<svg class="b" style="left:1600.00px;top:525.90px;" width="18" height="6" viewBox="0 0 18 6"><g fill="#222"><circle cx="3" cy="3" r="1.6"/><circle cx="9" cy="3" r="1.6"/><circle cx="15" cy="3" r="1.6"/></g></svg>
<div class="b" style="left:484.00px;top:568.00px;width:644.80px;height:83.00px;border:1px solid #e6e6e6;border-radius:3px;box-sizing:border-box;background:#fff;overflow:hidden"></div>
<div class="b" style="left:485.00px;top:569.00px;width:642.80px;height:48.60px;background:#f5f5f5"></div>
<div class="t" style="left:501.00px;top:582.16px;font-size:16px;line-height:20.0px;color:#111;letter-spacing:-0.35px;">Order number</div>
<div class="t" style="left:501.00px;top:626.90px;font-size:14px;line-height:17.5px;color:#aaa;letter-spacing:-0.2px;">Integer</div>
<svg class="b" style="left:619.50px;top:584.00px;" width="7" height="17" viewBox="0 0 7 17"><g fill="none" stroke="#333" stroke-width="1.1"><circle cx="3.5" cy="3.9" r="1.1"/><circle cx="3.5" cy="8.5" r="1.1"/><circle cx="3.5" cy="13.3" r="1.1"/></g></svg>
<div class="b" style="left:645.00px;top:569.00px;width:1.00px;height:81.00px;background:#e8e8e8"></div>
<div class="t" style="left:661.70px;top:582.16px;font-size:16px;line-height:20.0px;color:#111;letter-spacing:-0.35px;">Item name</div>
<div class="t" style="left:661.70px;top:626.90px;font-size:14px;line-height:17.5px;color:#aaa;letter-spacing:-0.2px;">Single-Line</div>
<svg class="b" style="left:780.20px;top:584.00px;" width="7" height="17" viewBox="0 0 7 17"><g fill="none" stroke="#333" stroke-width="1.1"><circle cx="3.5" cy="3.9" r="1.1"/><circle cx="3.5" cy="8.5" r="1.1"/><circle cx="3.5" cy="13.3" r="1.1"/></g></svg>
<div class="b" style="left:806.00px;top:569.00px;width:1.00px;height:81.00px;background:#e8e8e8"></div>
<div class="t" style="left:822.70px;top:582.16px;font-size:16px;line-height:20.0px;color:#111;letter-spacing:-0.35px;">Quantity</div>
<div class="t" style="left:822.70px;top:626.90px;font-size:14px;line-height:17.5px;color:#aaa;letter-spacing:-0.2px;">Integer</div>
<svg class="b" style="left:941.20px;top:584.00px;" width="7" height="17" viewBox="0 0 7 17"><g fill="none" stroke="#333" stroke-width="1.1"><circle cx="3.5" cy="3.9" r="1.1"/><circle cx="3.5" cy="8.5" r="1.1"/><circle cx="3.5" cy="13.3" r="1.1"/></g></svg>
<div class="b" style="left:967.00px;top:569.00px;width:1.00px;height:81.00px;background:#e8e8e8"></div>
<div class="t" style="left:983.70px;top:582.16px;font-size:16px;line-height:20.0px;color:#111;letter-spacing:-0.35px;">Cost</div>
<div class="t" style="left:983.70px;top:626.90px;font-size:14px;line-height:17.5px;color:#aaa;letter-spacing:-0.2px;">Decimal</div>
<svg class="b" style="left:1102.20px;top:584.00px;" width="7" height="17" viewBox="0 0 7 17"><g fill="none" stroke="#333" stroke-width="1.1"><circle cx="3.5" cy="3.9" r="1.1"/><circle cx="3.5" cy="8.5" r="1.1"/><circle cx="3.5" cy="13.3" r="1.1"/></g></svg>
<div class="t" style="left:1147.90px;top:599.76px;font-size:16px;line-height:20.0px;color:#4a9be6;letter-spacing:-0.35px;">+ New Field</div>
<div class="b" style="left:1082px;top:625px;width:253px;height:271px;border:1px solid #d6d6d6;border-radius:12px;box-sizing:border-box;background:#fff;box-shadow:0 14px 28px rgba(0,0,0,0.16),0 2px 8px rgba(0,0,0,0.06)"></div>
<svg class="b" style="left:1208.00px;top:616.50px;" width="19" height="10" viewBox="0 0 19 10"><path d="M0.8 9.2 L9.3 1 L17.8 9.2" fill="#fff" stroke="#d6d6d6" stroke-width="1"/><rect x="0" y="9.1" width="19" height="2" fill="#fff"/></svg>
<div class="b" style="left:1099.00px;top:627.10px;width:212.50px;height:54.40px;border-bottom:1px solid #ededed;border-radius:0 0 6px 6px;box-sizing:border-box"></div>
<svg class="b" style="left:1112.80px;top:652.00px;" width="16.0" height="16.0" viewBox="0 0 16 16"><g fill="none" stroke="#333" stroke-width="1.3" stroke-linecap="round" stroke-linejoin="round"><rect x="1.4" y="5.2" width="13.6" height="5.6" rx="2.8"/><line x1="5" y1="3" x2="5" y2="13"/></g></svg>
<div class="t" style="left:1138.40px;top:652.26px;font-size:16px;line-height:20.0px;color:#111;letter-spacing:-0.4px;">Single-Line</div>
<div class="b" style="left:1099.00px;top:668.00px;width:212.50px;height:54.40px;border-bottom:1px solid #ededed;border-radius:0 0 6px 6px;box-sizing:border-box"></div>
<svg class="b" style="left:1112.80px;top:692.90px;" width="16.0" height="16.0" viewBox="0 0 16 16"><g fill="none" stroke="#333" stroke-width="1.3" stroke-linecap="round" stroke-linejoin="round"><path d="M5 5.2 H12.2 A2.8 2.8 0 0 1 12.2 10.8 H4.2 A2.8 2.8 0 0 1 4.2 5.2"/><line x1="5" y1="3" x2="5" y2="13"/><path d="M9.6 10.6 L12.6 7.6 L13.6 8.6 L10.6 11.2"/></g></svg>
<div class="t" style="left:1138.40px;top:693.16px;font-size:16px;line-height:20.0px;color:#111;letter-spacing:-0.4px;">Multi-Line</div>
<div class="b" style="left:1099.00px;top:708.10px;width:212.50px;height:54.40px;border-bottom:1px solid #ededed;border-radius:0 0 6px 6px;box-sizing:border-box"></div>
<svg class="b" style="left:1112.80px;top:733.00px;" width="16.0" height="16.0" viewBox="0 0 16 16"><g fill="none" stroke="#333" stroke-width="1.3" stroke-linecap="round" stroke-linejoin="round"><rect x="2.4" y="1.2" width="11.2" height="13.6" rx="2"/><line x1="2.4" y1="6.2" x2="13.6" y2="6.2"/><line x1="8.6" y1="1.2" x2="8.6" y2="6.2"/><line x1="4.2" y1="9.4" x2="11.4" y2="9.4"/><line x1="4.2" y1="12.2" x2="11.4" y2="12.2"/></g><rect x="10.2" y="2.8" width="2" height="2" fill="#333"/></svg>
<div class="t" style="left:1138.40px;top:733.26px;font-size:16px;line-height:20.0px;color:#111;letter-spacing:-0.4px;">Dropdown</div>
<div class="b" style="left:1099.00px;top:749.20px;width:212.50px;height:54.40px;border-bottom:1px solid #ededed;border-radius:0 0 6px 6px;box-sizing:border-box"></div>
<svg class="b" style="left:1112.80px;top:774.10px;" width="16.0" height="16.0" viewBox="0 0 16 16"><g fill="none" stroke="#333" stroke-width="1.3" stroke-linecap="round" stroke-linejoin="round"><path d="M8.6 14.4 H4 A3 3 0 0 1 1 11.4 V4.4 A3 3 0 0 1 4 1.4 H9.6 A3 3 0 0 1 12.6 4.4 V11.6"/><circle cx="6.8" cy="6.4" r="1.3"/><path d="M4.4 10.8 Q6.8 7.8 9.2 10.8"/><path d="M9.6 13.4 L11.2 15.2 L14.4 12"/></g></svg>
<div class="t" style="left:1138.40px;top:774.36px;font-size:16px;line-height:20.0px;color:#111;letter-spacing:-0.4px;">User Dropdown</div>
<svg class="b" style="left:1112.80px;top:812.50px;" width="16.0" height="16.0" viewBox="0 0 16 16"><g fill="#333" stroke="#333" stroke-width="0.3" font-family="Liberation Sans, sans-serif" font-size="8.8" text-anchor="middle"><text x="3.9" y="7.2">1</text><text x="12" y="7.2">2</text><text x="3.9" y="15.1">3</text><text x="12" y="15.1">4</text></g></svg>
<div class="t" style="left:1138.40px;top:812.76px;font-size:16px;line-height:20.0px;color:#111;letter-spacing:-0.4px;">Integer</div>
<div class="b" style="left:1098.30px;top:841.00px;width:219.70px;height:1.00px;background:#e8e8e8"></div>
<div class="b" style="left:1312.20px;top:641.00px;width:6.80px;height:94.00px;background:#b9b9b9"></div>
<div class="t" style="left:1225.30px;top:855.90px;font-size:14px;line-height:17.5px;color:#4a9be6;letter-spacing:-0.35px;">Unused Fields</div>
<div class="b" style="left:444.00px;top:493.00px;width:1212.00px;height:429.00px;border:5px solid #e8604f;box-sizing:border-box"></div>
<div class="b" style="left:0.00px;top:1013.00px;width:1680.00px;height:2.00px;background:#f8f8f8"></div>
<div class="b" style="left:450.80px;top:957.80px;width:147.40px;height:34.00px;background:#e63f26;border-radius:17px"></div>
<div class="t" style="left:449.50px;width:150px;text-align:center;top:966.56px;font-size:16px;line-height:20.0px;color:#fff;letter-spacing:-0.4px;">Save and Next</div>
<div class="b" style="left:607.20px;top:957.00px;width:98.80px;height:35.60px;border:1px solid #b0b0b0;border-radius:18px;box-sizing:border-box"></div>
<div class="t" style="left:606.60px;width:100px;text-align:center;top:966.56px;font-size:16px;line-height:20.0px;color:#555;letter-spacing:-0.6px;">Save</div>
</body></html>
